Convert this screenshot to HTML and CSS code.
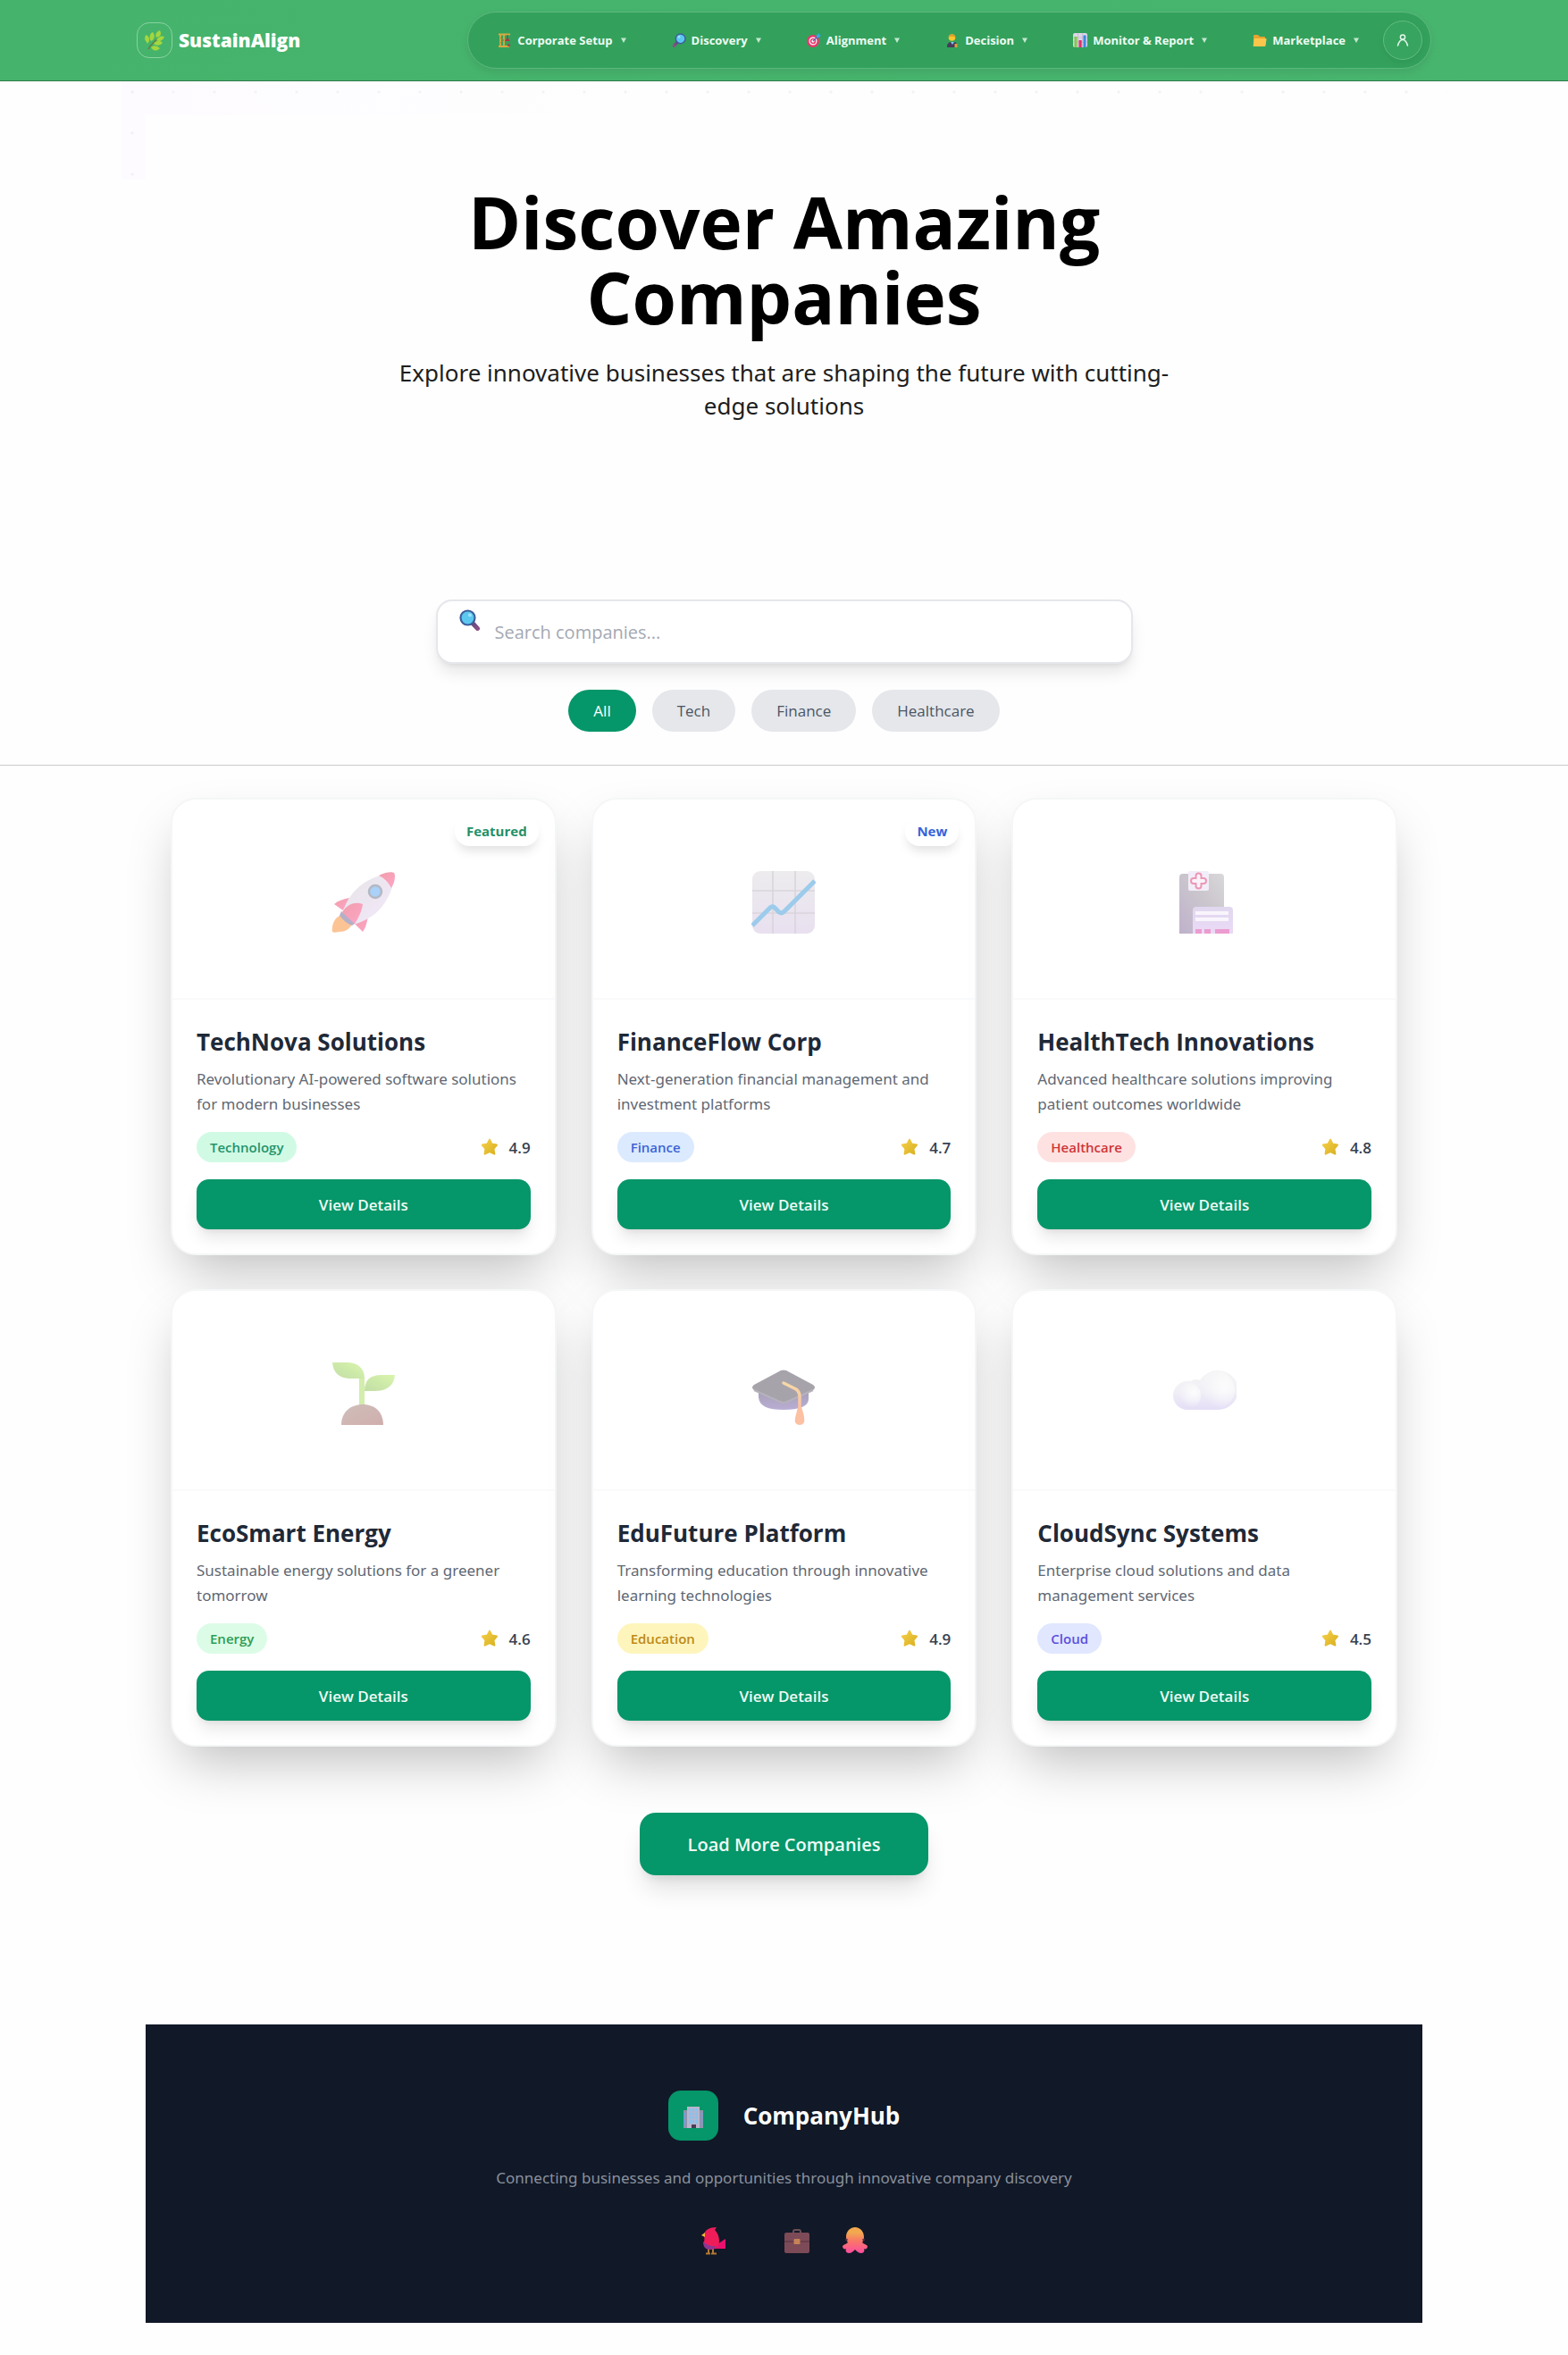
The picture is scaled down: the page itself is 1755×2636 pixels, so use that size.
FILE: index.html
```html
<!DOCTYPE html>
<html lang="en">
<head>
<meta charset="utf-8">
<meta name="viewport" content="width=device-width, initial-scale=1">
<title>SustainAlign - Discover Companies</title>
<link rel="stylesheet" href="styles.css">
</head>
<body>
<svg class="sprite" aria-hidden="true">
  <defs>
    <linearGradient id="gold" x1="0" y1="0" x2="1" y2="1"><stop offset="0" stop-color="#f5cf4a"/><stop offset="1" stop-color="#d9b01f"/></linearGradient>
    <linearGradient id="handle" x1="0" y1="0" x2="1" y2="1"><stop offset="0" stop-color="#5a4a7c"/><stop offset="1" stop-color="#8d4f86"/></linearGradient>
  </defs>
  <symbol id="star" viewBox="0 0 20 20"><path d="M10 1.6 12.6 6.6 18 7.6 14.4 11.9 15.4 17.6 10 15.2 4.6 17.6 5.4 11.9 1.8 7.6 7.4 6.6Z" fill="url(#gold)" stroke="url(#gold)" stroke-width="2" stroke-linejoin="round"/></symbol>
  <symbol id="lens" viewBox="0 0 24 24"><path d="M14.500 15 20.500 21.500" stroke="url(#handle)" stroke-width="5" stroke-linecap="round"/><circle cx="9.500" cy="9.500" r="8" fill="#5cc8f0" stroke="#3f5f9c" stroke-width="2.200"/><circle cx="12" cy="6.500" r="2" fill="#9fe4fb"/></symbol>
  <symbol id="caret" viewBox="0 0 6 6"><path d="M0 .5H6L3 6Z" fill="currentColor"/></symbol>
</svg>

<header class="topbar">
  <a class="brand" href="#">
    <span class="brand-mark">
      <svg width="24" height="24" viewBox="0 0 24 24" aria-hidden="true"><path d="M5 22C8 16 12 13 18 9" stroke="#6b7a3a" stroke-width="1.500" fill="none"/><g fill="#a4d63f"><path d="M3 14C0 11 1 7 3 6 7 9 7 13 4 16Z"/><path d="M8 13C5 9 7 4 10 3 13 7 12 11 8 13Z"/><path d="M14 9C12 5 15 2 18 1 20 5 19 8 14 9Z"/><path d="M14 12C17 7 20 7 23 8 21 13 17 14 14 12Z"/><path d="M11 16C14 12 18 12 21 15 17 19 14 18 11 16Z"/><path d="M8 20C11 17 15 18 18 21 14 25 10 24 8 20Z"/></g></svg>
    </span>
    <span class="brand-name">SustainAlign</span>
  </a>
  <nav class="menu" aria-label="Main">
    <button class="menu-item" type="button">
      <svg width="16" height="16" viewBox="0 0 16 16" aria-hidden="true"><path d="M1 1.500H14M3 2V14M7 2V14M1 15H13" stroke="#d8a941" stroke-width="1.800"/><path d="M3 5 7 8 3 11" stroke="#a9842f" fill="none"/><path d="M11 2V6" stroke="#555"/><path d="M8 9 11 5 14 9Z" fill="#b3324a"/><path d="M11 12H14V15H11Z" fill="#985046"/></svg>
      <span>Corporate Setup</span><svg class="caret" aria-hidden="true"><use href="#caret"/></svg>
    </button>
    <button class="menu-item" type="button">
      <svg class="flip" width="16" height="16" aria-hidden="true"><use href="#lens"/></svg>
      <span>Discovery</span><svg class="caret" aria-hidden="true"><use href="#caret"/></svg>
    </button>
    <button class="menu-item" type="button">
      <svg width="16" height="16" viewBox="0 0 16 16" aria-hidden="true"><circle cx="7" cy="9" r="5.700" fill="#fff" stroke="#e8386d" stroke-width="2.400"/><circle cx="7" cy="9" r="2.500" fill="#fff" stroke="#e8386d" stroke-width="1.700"/><path d="M7 9 12 4" stroke="#3a6fc4" stroke-width="1.300"/><path d="M11 5 11 2.500 13.500 0 14 2 16 2.500 13.500 5Z" fill="#35a8ec"/></svg>
      <span>Alignment</span><svg class="caret" aria-hidden="true"><use href="#caret"/></svg>
    </button>
    <button class="menu-item" type="button">
      <svg width="16" height="16" viewBox="0 0 16 16" aria-hidden="true"><path d="M2 16C2 11 4 10 8 10S14 11 13 16Z" fill="#463a5c"/><path d="M6 10H10L8 13Z" fill="#7dc7ef"/><circle cx="7.500" cy="5" r="3.800" fill="#fdc52d"/><path d="M4 5C4 0 11 0 11 5 9 3 6 3 4 5Z" fill="#d9992b"/><path d="M10.500 12H13.500V16H10.500Z" fill="#e0a03c"/></svg>
      <span>Decision</span><svg class="caret" aria-hidden="true"><use href="#caret"/></svg>
    </button>
    <button class="menu-item" type="button">
      <svg width="16" height="16" viewBox="0 0 16 16" aria-hidden="true"><rect width="16" height="16" rx="2" fill="#dcd6e6"/><path d="M5.500 0V16M10.500 0V16M0 5H16M0 10H16" stroke="#b9b0c6" stroke-width=".6"/><path d="M1.500 4H4.500V16H1.500Z" fill="#84c94a"/><path d="M6.500 8H9.700V16H6.500Z" fill="#e0326c"/><path d="M11.500 2.500H14.500V16H11.500Z" fill="#3b8ae0"/></svg>
      <span>Monitor &amp; Report</span><svg class="caret" aria-hidden="true"><use href="#caret"/></svg>
    </button>
    <button class="menu-item" type="button">
      <svg width="16" height="16" viewBox="0 0 16 16" aria-hidden="true"><path d="M1 3Q1 2 2 2H6L8 4H13Q14 4 14 5V14H1Z" fill="#e9a330"/><path d="M1.500 15Q.5 15 .7 14L1.500 7Q1.700 6 2.700 6H14.500Q15.700 6 15.500 7L14.500 14Q14.300 15 13.300 15Z" fill="#fbc64c"/></svg>
      <span>Marketplace</span><svg class="caret" aria-hidden="true"><use href="#caret"/></svg>
    </button>
    <button class="account" type="button" aria-label="Account">
      <svg width="16" height="16" viewBox="0 0 16 16" fill="none" stroke="#e6f7ec" stroke-width="1.500" stroke-linecap="round" aria-hidden="true"><circle cx="8" cy="4.500" r="2.600"/><path d="M2.500 14C3.500 10.500 5.500 7.500 8 7.500S12.500 10.500 13.500 14"/></svg>
    </button>
  </nav>
</header>

<main>
  <section class="hero">
    <h1>Discover Amazing Companies</h1>
    <p>Explore innovative businesses that are shaping the future with cutting-edge solutions</p>
  </section>

  <section class="finder">
    <div class="search">
      <svg class="search-icon" width="24" height="24" aria-hidden="true"><use href="#lens"/></svg>
      <input type="text" aria-label="Search companies" placeholder="Search companies...">
    </div>
    <div class="filters">
      <button class="chip chip-on" type="button">All</button>
      <button class="chip" type="button">Tech</button>
      <button class="chip" type="button">Finance</button>
      <button class="chip" type="button">Healthcare</button>
    </div>
  </section>

  <section class="cards" aria-label="Companies">
    <article class="card">
      <div class="card-art">
        <span class="badge badge-green">Featured</span>
        <svg width="72" height="72" viewBox="0 0 72 72" aria-hidden="true">
          <defs><linearGradient id="r1" x1="0" y1="0" x2="1" y2="1"><stop offset="0" stop-color="#cfcbd2"/><stop offset="1" stop-color="#e9d3f6"/></linearGradient><linearGradient id="r2" x1="0" y1="0" x2="1" y2="1"><stop offset="0" stop-color="#e23f58"/><stop offset="1" stop-color="#ff4f92"/></linearGradient></defs>
          <path d="M11 50C3 53 0 62 1 69 5 71 8 68 11 69 17 68 21 65 23 60Z" fill="#fa8a2e"/>
          <path d="M3 38C8 34 14 32 20 31L13 45Z" fill="url(#r2)"/><path d="M26 60 41 51C40 58 38 65 35 69Z" fill="url(#r2)"/>
          <path d="M54 6C32 13 18 28 12 49L25 61C47 54 60 42 68 19Z" fill="url(#r1)"/>
          <path d="M11 46 27 59 23 62C18 60 13 56 9 51Z" fill="#6e6292"/>
          <path d="M12 47C16 40 25 34 35 38 34 46 30 54 26 60Z" fill="url(#r2)"/>
          <path d="M53 6C62 1 69 2 70 3 72 5 71 14 67 20 64 14 59 9 53 6Z" fill="url(#r2)"/>
          <circle cx="49" cy="24" r="7" fill="#56a5f5" stroke="#6e7389" stroke-width="2.500"/>
        </svg>
      </div>
      <div class="card-body">
        <h2>TechNova Solutions</h2>
        <p>Revolutionary AI-powered software solutions for modern businesses</p>
        <div class="meta"><span class="tag tag-tech">Technology</span><span class="rating"><svg width="20" height="20" aria-hidden="true"><use href="#star"/></svg>4.9</span></div>
        <button class="view" type="button">View Details</button>
      </div>
    </article>

    <article class="card">
      <div class="card-art">
        <span class="badge badge-blue">New</span>
        <svg width="72" height="72" viewBox="0 0 72 72" aria-hidden="true">
          <defs><linearGradient id="c1" x1="0" y1="0" x2="0" y2="1"><stop offset="0" stop-color="#dcdadd"/><stop offset="1" stop-color="#d3c2e2"/></linearGradient></defs>
          <rect x="1" y="1" width="70" height="70" rx="9" fill="url(#c1)"/>
          <path d="M24 1V71M49 1V71M1 23H71M1 48H71" stroke="#b4acba" stroke-width="1.600"/>
          <path d="M1 62 21 42Q24 39 27 43L31 47Q34 49 37 46L71 12" fill="none" stroke="#3b98d9" stroke-width="5"/>
        </svg>
      </div>
      <div class="card-body">
        <h2>FinanceFlow Corp</h2>
        <p>Next-generation financial management and investment platforms</p>
        <div class="meta"><span class="tag tag-finance">Finance</span><span class="rating"><svg width="20" height="20" aria-hidden="true"><use href="#star"/></svg>4.7</span></div>
        <button class="view" type="button">View Details</button>
      </div>
    </article>

    <article class="card">
      <div class="card-art">
        <svg width="72" height="72" viewBox="0 0 72 72" aria-hidden="true">
          <defs><linearGradient id="h1" x1="0" y1="1" x2="1" y2="0"><stop offset="0" stop-color="#80669a"/><stop offset=".6" stop-color="#99919d"/><stop offset="1" stop-color="#b6b2b8"/></linearGradient><linearGradient id="h2" x1="0" y1="0" x2="0" y2="1"><stop offset="0" stop-color="#c3b2e0"/><stop offset="1" stop-color="#d8b6ef"/></linearGradient></defs>
          <path d="M8 8Q8 4 12 4H54Q58 4 58 8V71H8Z" fill="url(#h1)"/>
          <rect x="18" y="1" width="23" height="22" rx="2" fill="#e7dcf2"/>
          <path d="M26.500 9V6.500a3 3 0 0 1 6 0V9H35a3 3 0 0 1 0 6H32.500V17.500a3 3 0 0 1-6 0V15H24a3 3 0 0 1 0-6Z" fill="#f5e6f5" stroke="#d8336d" stroke-width="2"/>
          <path d="M23 45Q23 41 27 41H64Q68 41 68 45V71H23Z" fill="url(#h2)"/>
          <path d="M26 48H63M26 55H63" stroke="#f5ecfb" stroke-width="4"/><path d="M26 66H33V71H26ZM36 66H43V71H36ZM48 66H64V71H48Z" fill="#d83ba3"/>
        </svg>
      </div>
      <div class="card-body">
        <h2>HealthTech Innovations</h2>
        <p>Advanced healthcare solutions improving patient outcomes worldwide</p>
        <div class="meta"><span class="tag tag-health">Healthcare</span><span class="rating"><svg width="20" height="20" aria-hidden="true"><use href="#star"/></svg>4.8</span></div>
        <button class="view" type="button">View Details</button>
      </div>
    </article>

    <article class="card">
      <div class="card-art">
        <svg width="72" height="72" viewBox="0 0 72 72" aria-hidden="true">
          <defs><linearGradient id="e1" x1="0" y1="1" x2="1" y2="0"><stop offset="0" stop-color="#86bd50"/><stop offset="1" stop-color="#b4ed5b"/></linearGradient><linearGradient id="e2" x1="0" y1="0" x2="1" y2="1"><stop offset="0" stop-color="#a08076"/><stop offset="1" stop-color="#a2605f"/></linearGradient></defs>
          <path d="M34 51V18" stroke="#a8dd5b" stroke-width="6"/>
          <path d="M1 1H17C30 1 37 8 37 19H22C9 19 2 13 1 1Z" fill="url(#e1)"/>
          <path d="M71 15H56C43 15 37 21 37 33H48C62 33 70 27 71 15Z" fill="url(#e1)"/>
          <path d="M11 71C11 57 21 48 35 48S58 57 58 71Z" fill="url(#e2)"/>
        </svg>
      </div>
      <div class="card-body">
        <h2>EcoSmart Energy</h2>
        <p>Sustainable energy solutions for a greener tomorrow</p>
        <div class="meta"><span class="tag tag-energy">Energy</span><span class="rating"><svg width="20" height="20" aria-hidden="true"><use href="#star"/></svg>4.6</span></div>
        <button class="view" type="button">View Details</button>
      </div>
    </article>

    <article class="card">
      <div class="card-art">
        <svg width="72" height="72" viewBox="0 0 72 72" aria-hidden="true">
          <defs><linearGradient id="g1" x1="0" y1="0" x2="0" y2="1"><stop offset="0" stop-color="#493b62"/><stop offset="1" stop-color="#765faa"/></linearGradient><linearGradient id="g2" x1="0" y1="0" x2="0" y2="1"><stop offset="0" stop-color="#efb453"/><stop offset="1" stop-color="#fa7d3f"/></linearGradient></defs>
          <path d="M8 28H64V42C64 50 54 54 36 54S9 50 8 40Z" fill="url(#g1)"/>
          <path d="M33 10Q36 9 39 10L69 26Q73 29 69 32L40 45Q36 47 32 45L3 32Q-1 29 3 26Z" fill="#514a59"/>
          <path d="M3 32 32 45Q36 47 40 45L69 32" fill="none" stroke="#70677b" stroke-width="2"/>
          <path d="M36 24 50 31Q54 34 54 39V57" fill="none" stroke="url(#g2)" stroke-width="3.500" stroke-linecap="round"/>
          <path d="M52 51H56C58 57 60 63 59 68 57 72 51 72 49 68 48 63 51 57 52 51Z" fill="#fa8548"/>
        </svg>
      </div>
      <div class="card-body">
        <h2>EduFuture Platform</h2>
        <p>Transforming education through innovative learning technologies</p>
        <div class="meta"><span class="tag tag-education">Education</span><span class="rating"><svg width="20" height="20" aria-hidden="true"><use href="#star"/></svg>4.9</span></div>
        <button class="view" type="button">View Details</button>
      </div>
    </article>

    <article class="card">
      <div class="card-art">
        <svg width="72" height="72" viewBox="0 0 72 72" aria-hidden="true">
          <defs><linearGradient id="k1" x1="0" y1="0" x2="0" y2="1"><stop offset="0" stop-color="#ececee"/><stop offset=".5" stop-color="#e5e2ee"/><stop offset="1" stop-color="#cbbff0"/></linearGradient><radialGradient id="k2" cx=".72" cy=".4" r=".6"><stop offset="0" stop-color="#fbfbfc"/><stop offset="1" stop-color="#fbfbfc" stop-opacity="0"/></radialGradient></defs>
          <circle cx="27" cy="24" r="10" transform="translate(0 6)" fill="#e4e2e6"/>
          <path d="M17 54A16 16 0 0 1 17 22C22 21 26 22 29 25A23 22 0 1 1 51 54Z" fill="url(#k1)"/>
          <circle cx="49" cy="32" r="21" fill="url(#k2)"/><circle cx="18" cy="38" r="14" fill="url(#k2)"/>
        </svg>
      </div>
      <div class="card-body">
        <h2>CloudSync Systems</h2>
        <p>Enterprise cloud solutions and data management services</p>
        <div class="meta"><span class="tag tag-cloud">Cloud</span><span class="rating"><svg width="20" height="20" aria-hidden="true"><use href="#star"/></svg>4.5</span></div>
        <button class="view" type="button">View Details</button>
      </div>
    </article>
  </section>

  <div class="more"><button class="load" type="button">Load More Companies</button></div>
</main>

<footer class="footer">
  <div class="footer-brand">
    <span class="footer-mark">
      <svg width="24" height="26" viewBox="0 0 24 26" aria-hidden="true"><path d="M1 5H23V25H1Z" fill="#8d93ad"/><path d="M5 1H19V25H5Z" fill="#b9b5cc"/><path d="M7 3H17V20H7Z" fill="#83c3f0"/><path d="M10.300 3V20M13.700 3V20M7 7H17M7 11H17M7 15H17" stroke="#b9b5cc"/><path d="M2.500 8V22M21.500 8V22" stroke="#69a4df" stroke-width="1.600" stroke-dasharray="3 1"/><path d="M10 21H15V25H10Z" fill="#463f55"/></svg>
    </span>
    <strong>CompanyHub</strong>
  </div>
  <p>Connecting businesses and opportunities through innovative company discovery</p>
  <div class="social">
    <a href="#" aria-label="Twitter"><svg width="28" height="32" viewBox="0 0 28 32" aria-hidden="true"><path d="M8 25V30M13 25V30M5 30.500H10M11 30.500H17" stroke="#b4792f" stroke-width="2"/><path d="M16 21 27 14V25H14Z" fill="#e80f6f"/><path d="M3 9C4 4 9 1 17 1L15 4C19 8 20 13 20 17 20 23 15 26 10 26 4 26 2 22 3 17 4 14 3 12 3 9Z" fill="#ee1d5a"/><path d="M2 17C2 23 5 26 10 26 13 26 16 24 17 22 12 23 6 21 2 17Z" fill="#8b3794"/><path d="M0 10 4 7V12Z" fill="#f0b93a"/></svg></a>
    <a class="social-work" href="#" aria-label="LinkedIn"><svg width="28" height="32" viewBox="0 0 28 32" aria-hidden="true"><path d="M10 8V6Q10 4 12 4H16Q18 4 18 6V8" fill="none" stroke="#6b5055" stroke-width="2"/><rect y="7" width="28" height="23" rx="2" fill="#7d4a58"/><path d="M0 17H28" stroke="#633b4a" stroke-width="1.500"/><rect x="10.500" y="14" width="7" height="6" rx="1" fill="#c68355"/></svg></a>
    <a href="#" aria-label="GitHub"><svg width="28" height="32" viewBox="0 0 28 32" aria-hidden="true"><defs><linearGradient id="o1" x1="0" y1="0" x2="0" y2="1"><stop offset=".2" stop-color="#f2a94e"/><stop offset=".55" stop-color="#f97569"/><stop offset="1" stop-color="#fb4da0"/></linearGradient></defs><path d="M14 1C20 1 24 6 24 12 24 15 23 17 22 18 24 20 26 20 28 22 28 25 26 26 24 25 25 27 24 30 21 30 18 30 16 28 14 26 12 28 10 30 7 30 4 30 3 27 4 25 2 26 0 25 0 22 2 20 4 20 6 18 5 17 4 15 4 12 4 6 8 1 14 1Z" fill="url(#o1)"/><circle cx="4.500" cy="15" r="1.300" fill="#5c3349"/><circle cx="23.500" cy="15" r="1.300" fill="#5c3349"/></svg></a>
  </div>
</footer>
</body>
</html>
```
FILE: styles.css
```css
* { box-sizing: border-box; }

body {
  margin: 0;
  background: #fefefe;
  color: #1f2937;
  font-family: "Open Sans", "Noto Sans", sans-serif;
}

button, input { font: inherit; }
button { border: 0; cursor: pointer; }
a { color: inherit; text-decoration: none; }
h1, h2, p { margin: 0; }
p { font-family: "Noto Sans", "Open Sans", sans-serif; }
svg { flex: none; display: block; }
.sprite { position: absolute; width: 0; height: 0; }

/* Top bar */
.topbar {
  display: flex;
  align-items: center;
  justify-content: space-between;
  height: 91px;
  padding: 0 153px;
  background: linear-gradient(135deg, #45b36b, #48b56e);
  border-bottom: 1px solid #2f7a4c;
}
.brand { display: flex; align-items: center; gap: 7px; color: #fff; }
.brand-mark {
  display: grid;
  place-items: center;
  width: 40px;
  height: 40px;
  border: 1px solid #8ad2a2;
  border-radius: 14px;
}
.brand-name { font-size: 21px; font-weight: 800; }
.menu {
  display: flex;
  align-items: center;
  height: 64px;
  padding: 0 9px;
  background: #33a15c;
  border: 1px solid #5db87f;
  border-radius: 32px;
  box-shadow: 0 4px 8px rgba(0, 0, 0, 0.08);
}
.menu-item {
  display: flex;
  align-items: center;
  gap: 6px;
  padding: 0 27px 0 24px;
  background: none;
  color: #eefbf2;
  font-size: 13px;
  font-weight: 700;
  white-space: nowrap;
}
.menu-item .flip { transform: scaleX(-1); }
.caret { width: 6px; height: 6px; margin-left: 3px; color: #c4e8d0; }
.account {
  display: grid;
  place-items: center;
  width: 44px;
  height: 44px;
  padding: 0;
  background: #37a45f;
  border: 1px solid #62bd83;
  border-radius: 50%;
  box-shadow: 0 4px 8px rgba(0, 0, 0, 0.06);
}

/* Hero */
.hero {
  position: relative;
  padding: 115px 136px 116px;
  text-align: center;
  color: #000;
}

/* Dotted tint along the top and left edges */
.hero::before,
.hero::after {
  content: "";
  position: absolute;
  top: 0;
  left: 136px;
}
.hero::before {
  width: 27px;
  height: 110px;
  background: radial-gradient(circle at 12px 12px, #f1eef4 1px, transparent 2px) 0 0 / 46px 46px, #fdfbff;
}
.hero::after {
  left: 163px;
  right: 136px;
  height: 37px;
  background:
    radial-gradient(circle at 31px 12px, #f3f3f5 1px, transparent 2px) 0 0 / 46px 46px,
    linear-gradient(90deg, #fdfbff, #fefefe 540px);
}
.hero h1 {
  max-width: 883px;
  margin: 0 auto 25px;
  font-size: 80px;
  line-height: 84px;
  font-weight: 700;
}
.hero p {
  max-width: 883px;
  margin: 0 auto;
  font-size: 26px;
  line-height: 37px;
  color: #1d1d1d;
}

/* Search and filters */
.finder {
  padding: 82px 24px 37px;
  border-bottom: 1px solid #c9c9c9;
}
.search { position: relative; max-width: 780px; margin: 0 auto 29px; }
.search-icon { position: absolute; left: 26px; top: 11px; }
.search input {
  display: block;
  width: 100%;
  height: 72px;
  padding: 0 24px 0 64px;
  font-size: 20px;
  color: #1f2937;
  background: #fff;
  border: 2px solid #e5e7eb;
  border-radius: 18px;
  box-shadow: 0 12px 18px -3px rgba(0, 0, 0, 0.1), 0 4px 7px -4px rgba(0, 0, 0, 0.1);
}
.search input::placeholder { color: #a4a9b3; opacity: 1; }
.filters { display: flex; flex-wrap: wrap; justify-content: center; gap: 18px; }
.chip {
  height: 47px;
  padding: 0 28px;
  border-radius: 24px;
  background: #e5e7eb;
  color: #4b5563;
  font-size: 17px;
}
.chip-on { background: #059669; color: #fff; }

/* Company cards */
.cards {
  display: grid;
  grid-template-columns: repeat(3, 1fr);
  gap: 38px 39px;
  max-width: 1373px;
  margin: 36px auto 0;
}
.card {
  background: #fff;
  border: 2px solid #f5f6f7;
  border-radius: 28px;
  box-shadow: 0 28px 58px -12px rgba(0, 0, 0, 0.25);
}
.card-art {
  position: relative;
  display: grid;
  place-items: center;
  height: 224px;
  padding-top: 8px;
  border-bottom: 2px solid #f9fafb;
}
.card-art svg { opacity: 0.5; }
.badge {
  position: absolute;
  top: 18px;
  right: 18px;
  padding: 0 13px;
  background: #fff;
  border-radius: 16px;
  box-shadow: 0 8px 12px -3px rgba(0, 0, 0, 0.12);
  font-size: 15px;
  line-height: 34px;
  font-weight: 700;
}
.badge-green { color: #1f9068; }
.badge-blue { color: #3762d8; }
.card-body { padding: 29px 27px 27px; }
.card h2 {
  margin-bottom: 10px;
  font-size: 26px;
  line-height: 36px;
  font-weight: 700;
}
.card p {
  margin-bottom: 17px;
  min-height: 56px;
  font-size: 17px;
  line-height: 28px;
  color: #5f6873;
}
.meta {
  display: flex;
  align-items: center;
  justify-content: space-between;
  margin-bottom: 19px;
}
.tag {
  padding: 0 15px;
  border-radius: 17px;
  font-size: 15px;
  line-height: 34px;
  font-weight: 600;
}
.tag-tech { background: #d1fae5; color: #23946b; }
.tag-finance { background: #dbeafe; color: #3b64d6; }
.tag-health { background: #fee2e2; color: #cf3535; }
.tag-energy { background: #dcfce7; color: #2f9c55; }
.tag-education { background: #fef5bd; color: #bd8a17; }
.tag-cloud { background: #e0e7ff; color: #5c50dc; }
.rating {
  display: flex;
  align-items: center;
  gap: 12px;
  color: #374151;
  font-size: 17px;
  font-weight: 600;
}
.view {
  display: block;
  width: 100%;
  height: 56px;
  background: #059669;
  border-radius: 14px;
  box-shadow: 0 12px 18px -3px rgba(0, 0, 0, 0.1), 0 4px 7px -4px rgba(0, 0, 0, 0.1);
  color: #f0fbf6;
  font-size: 17px;
  font-weight: 600;
}

.more { display: flex; justify-content: center; padding: 74px 24px 167px; }
.load {
  height: 70px;
  padding: 0 54px;
  background: #059669;
  border-radius: 18px;
  box-shadow: 0 20px 28px -6px rgba(0, 0, 0, 0.12), 0 8px 12px -6px rgba(0, 0, 0, 0.1);
  color: #f0fbf6;
  font-size: 20px;
  font-weight: 600;
}

/* Footer */
.footer {
  display: flex;
  flex-direction: column;
  align-items: center;
  margin: 0 163px 36px;
  padding: 74px 24px 73px;
  background: #111827;
  text-align: center;
}
.footer-brand { display: flex; align-items: center; gap: 28px; }
.footer-mark {
  display: grid;
  place-items: center;
  width: 56px;
  height: 56px;
  padding-top: 4px;
  background: #059669;
  border-radius: 14px;
}
.footer-brand strong { color: #fff; font-size: 26px; }
.footer p { margin: 28px 0 37px; font-size: 17px; line-height: 28px; color: #89919e; }
.social { display: flex; gap: 37px; height: 38px; align-items: center; }
.social-work { margin-left: 28px; }
```
